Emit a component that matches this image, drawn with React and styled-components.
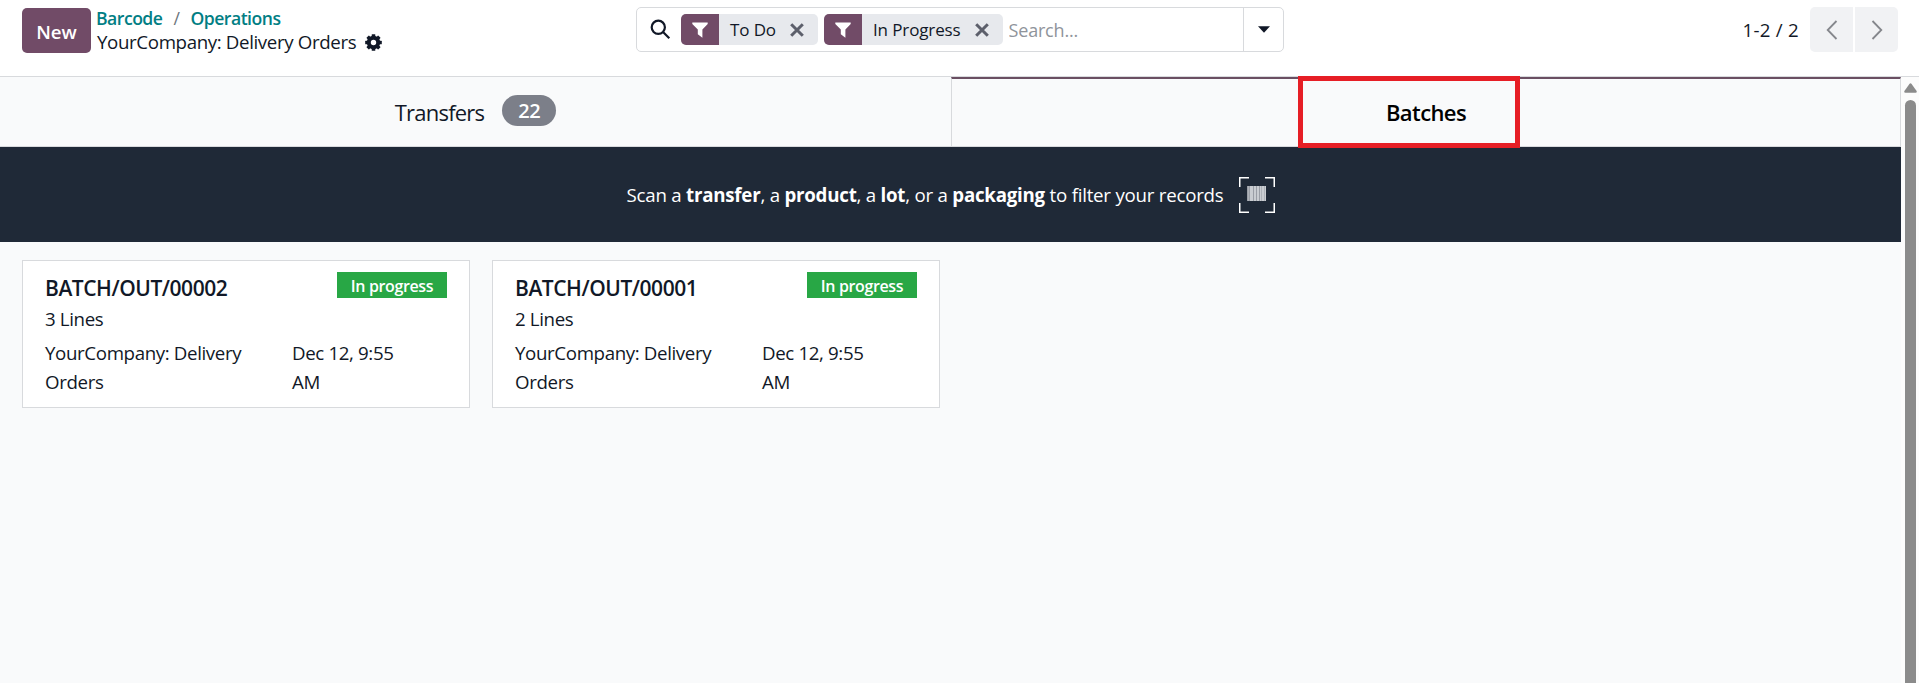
import styled, { createGlobalStyle } from "styled-components";

const batches = [
  { name: "BATCH/OUT/00002", lines: 3, date: "Dec 12, 9:55 AM" },
  { name: "BATCH/OUT/00001", lines: 2, date: "Dec 12, 9:55 AM" },
];

const facets = ["To Do", "In Progress"];

const Facet = ({ label }) => (
  <FacetWrapper>
    <FacetIcon>
      <svg width="16" height="16" viewBox="0 0 16 16" fill="#fff">
        <path d="M0.3 0.4H15.7V2L10.4 7.6V15.8L5.8 12.2V7.6L0.3 2Z" />
      </svg>
    </FacetIcon>
    <FacetLabel>{label}</FacetLabel>
    <FacetClose aria-label="Remove">
      <svg width="14" height="14" viewBox="0 0 14 14">
        <path d="M1.2 1.2L12.8 12.8M12.8 1.2L1.2 12.8" stroke="#5c5f6b" strokeWidth="3" />
      </svg>
    </FacetClose>
  </FacetWrapper>
);

const GearIcon = () => (
  <svg width="17" height="17" viewBox="0 0 17 17">
    <circle cx="8.5" cy="8.5" r="4.7" fill="none" stroke="#111827" strokeWidth="4" />
    {[0, 45, 90, 135, 180, 225, 270, 315].map((angle) => (
      <rect
        key={angle}
        x="6.7"
        y="0.2"
        width="3.6"
        height="3"
        rx="0.5"
        fill="#111827"
        transform={`rotate(${angle} 8.5 8.5)`}
      />
    ))}
  </svg>
);

const BarcodeIcon = () => (
  <svg width="36" height="36" viewBox="0 0 36 36">
    <path
      d="M0.75 10V0.75H10M26 0.75H35.25V10M35.25 26V35.25H26M10 35.25H0.75V26"
      fill="none"
      stroke="#fff"
      strokeWidth="1.5"
    />
    <rect x="8" y="9" width="19" height="15" fill="#c9ccd1" />
    <path d="M8.5 9V24M10.5 9V24M14.5 9V24M17.5 9V24M20.5 9V24" stroke="#9a9ea6" />
    <path d="M9.5 9V24M22.5 9V24M25.5 9V24" stroke="#adb1b8" />
  </svg>
);

const BatchCard = ({ batch }) => (
  <Card>
    <CardHeader>
      <CardTitle>{batch.name}</CardTitle>
      <Status>In progress</Status>
    </CardHeader>
    <CardLines>{batch.lines} Lines</CardLines>
    <CardDetails>
      <span>YourCompany: Delivery Orders</span>
      <span>{batch.date}</span>
    </CardDetails>
  </Card>
);

const App = () => {
  return (
    <Page>
      <GlobalStyle />
      <ControlPanel>
        <Left>
          <NewButton>New</NewButton>
          <Breadcrumb>
            <Links>
              <a>Barcode</a>
              <Slash>/</Slash>
              <a>Operations</a>
            </Links>
            <Current>
              YourCompany: Delivery Orders
              <GearIcon />
            </Current>
          </Breadcrumb>
        </Left>
        <SearchBar>
          <SearchIcon width="21" height="21" viewBox="0 0 21 21">
            <circle cx="8.3" cy="8.3" r="6.6" />
            <path d="M13 13L19.3 19.3" />
          </SearchIcon>
          {facets.map((label) => (
            <Facet key={label} label={label} />
          ))}
          <SearchInput placeholder="Search..." />
          <Toggler aria-label="Toggle search panel">
            <svg width="12" height="7" viewBox="0 0 12 7" fill="#111827">
              <path d="M0 0.3H12L6 6.8Z" />
            </svg>
          </Toggler>
        </SearchBar>
        <Pager>
          <span>1-2 / 2</span>
          <PagerButton $side="left" aria-label="Previous">
            <svg width="12" height="20" viewBox="0 0 12 20">
              <path d="M10.5 1L1.7 10L10.5 19" />
            </svg>
          </PagerButton>
          <PagerButton $side="right" aria-label="Next">
            <svg width="12" height="20" viewBox="0 0 12 20">
              <path d="M1.5 1L10.3 10L1.5 19" />
            </svg>
          </PagerButton>
        </Pager>
      </ControlPanel>
      <Main>
        <Content>
          <Tabs>
            <Tab>
              Transfers
              <Count>22</Count>
            </Tab>
            <Tab $active>
              Batches
              <Highlight />
            </Tab>
          </Tabs>
          <Banner>
            <p>
              Scan a <b>transfer</b>, a <b>product</b>, a <b>lot</b>, or a{" "}
              <b>packaging</b> to filter your records
            </p>
            <BarcodeIcon />
          </Banner>
          <Cards>
            {batches.map((batch) => (
              <BatchCard key={batch.name} batch={batch} />
            ))}
          </Cards>
        </Content>
        <Scrollbar>
          <svg width="13" height="10" viewBox="0 0 13 10" fill="#8b8b8b">
            <path d="M5.4 0.9Q6.5 -0.4 7.6 0.9L12.6 8Q13.2 9.7 11.6 9.8H1.4Q-0.2 9.7 0.4 8Z" />
          </svg>
          <Thumb />
        </Scrollbar>
      </Main>
    </Page>
  );
};

const GlobalStyle = createGlobalStyle`
  * {
    box-sizing: border-box;
  }

  body {
    margin: 0;
    background-color: #f9fafb;
    color: #111827;
    font-family: "Open Sans", "Noto Sans", sans-serif;
    font-size: 18.7px;
    letter-spacing: -0.36px;
  }

  button,
  input {
    font: inherit;
    color: inherit;
    border: 0;
    padding: 0;
    background: none;
  }

  svg {
    display: block;
    flex: none;
  }
`;

const Page = styled.div`
  display: flex;
  flex-direction: column;
  height: 100vh;
  overflow: hidden;
`;

const ControlPanel = styled.header`
  display: grid;
  grid-template-columns: 614px 648px 1fr;
  align-items: start;
  height: 77px;
  flex: none;
  padding: 7px 21px 0 22px;
  background-color: #fff;
  border-bottom: 1px solid #d8dadd;
`;

const Left = styled.div`
  display: flex;
  gap: 6px;
`;

const NewButton = styled.button`
  width: 69px;
  height: 45px;
  margin-top: 1px;
  padding-top: 1px;
  border-radius: 5px;
  background-color: #714b67;
  color: #fff;
  font-weight: 600;
  letter-spacing: 0;
`;

const Breadcrumb = styled.div`
  margin-top: -1px;
  line-height: 24px;
  white-space: nowrap;
`;

const Links = styled.div`
  display: flex;
  margin-left: -1px;
  color: #017e84;
  font-size: 17.6px;
  font-weight: 600;
  letter-spacing: -0.5px;
`;

const Slash = styled.span`
  margin: 0 11px;
  color: #6c757d;
  font-weight: 400;
`;

const Current = styled.div`
  display: flex;
  align-items: center;
  gap: 9px;
`;

const SearchBar = styled.div`
  display: flex;
  align-items: center;
  height: 45px;
  padding-left: 13px;
  border: 1px solid #d8dadd;
  border-radius: 5px;
`;

const SearchIcon = styled.svg`
  margin-right: 10px;
  fill: none;
  stroke: #111827;
  stroke-width: 2.2;
`;

const FacetWrapper = styled.div`
  display: flex;
  height: 31px;
  margin-right: 6px;
  border-radius: 5px;
  overflow: hidden;
  background-color: #e7e9ed;
  font-size: 17px;
  letter-spacing: -0.12px;
  line-height: 31px;
`;

const FacetIcon = styled.div`
  display: grid;
  place-items: center;
  width: 38px;
  background-color: #714b67;
`;

const FacetLabel = styled.span`
  margin: 0 14px 0 11px;
`;

const FacetClose = styled.button`
  margin-right: 14px;
`;

const SearchInput = styled.input`
  flex: 1;
  min-width: 0;
  height: 43px;
  font-size: 18px;
  letter-spacing: -0.2px;
  outline: none;

  &::placeholder {
    color: #8f949b;
  }
`;

const Toggler = styled.button`
  display: grid;
  place-items: center;
  width: 40px;
  height: 43px;
  border-left: 1px solid #d8dadd;
`;

const Pager = styled.div`
  display: flex;
  justify-content: flex-end;
  line-height: 45px;
  letter-spacing: 0.25px;

  span {
    margin-right: 11px;
  }
`;

const PagerButton = styled.button`
  display: grid;
  place-items: center;
  width: 43px;
  height: 45px;
  background-color: #f1f2f4;
  border-radius: ${({ $side }) => ($side === "left" ? "5px 0 0 5px" : "0 5px 5px 0")};

  & + & {
    margin-left: 2px;
  }

  path {
    fill: none;
    stroke: #85878c;
    stroke-width: 1.8;
  }
`;

const Main = styled.main`
  display: flex;
  flex: 1;
  min-height: 0;
`;

const Content = styled.div`
  flex: 1;
`;

const Tabs = styled.div`
  display: grid;
  grid-template-columns: 951px 950px;
  height: 70px;
  border-bottom: 1px solid #d8dadd;
`;

const Tab = styled.div`
  position: relative;
  display: flex;
  justify-content: center;
  padding-top: ${({ $active }) => ($active ? "18px" : "20px")};
  border: solid #d8dadd;
  border-width: ${({ $active }) => ($active ? "2px 1px 0" : "0")};
  border-top-color: #6a4f62;
  color: ${({ $active }) => ($active ? "#000" : "inherit")};
  font-size: 22px;
  font-weight: ${({ $active }) => ($active ? 600 : 400)};
  letter-spacing: ${({ $active }) => ($active ? "-0.6px" : "-0.78px")};
  line-height: 30px;
`;

const Count = styled.span`
  width: 54px;
  height: 31px;
  margin: -2px 0 0 18px;
  border-radius: 16px;
  background-color: #7c7f89;
  color: #fff;
  font-size: 20px;
  font-weight: 600;
  letter-spacing: -0.3px;
  line-height: 31px;
  text-align: center;
`;

// sits over the tab and its borders
const Highlight = styled.div`
  position: absolute;
  top: -3px;
  left: 346px;
  width: 222px;
  height: 72px;
  border: 5px solid #e61e25;
`;

const Banner = styled.div`
  display: flex;
  align-items: center;
  justify-content: center;
  gap: 15px;
  height: 95px;
  background-color: #1f2937;
  color: #fff;
  letter-spacing: -0.23px;

  p {
    margin: 0;
  }
`;

const Cards = styled.div`
  display: flex;
  gap: 22px;
  padding: 18px 22px;
`;

const Card = styled.article`
  width: 448px;
  height: 148px;
  padding: 11px 22px;
  border: 1px solid #d8dadd;
  background-color: #fff;
`;

const CardHeader = styled.div`
  display: flex;
  justify-content: space-between;
  align-items: flex-start;
  height: 33px;
`;

const CardTitle = styled.span`
  padding-top: 1px;
  font-size: 21px;
  font-weight: 600;
  letter-spacing: -0.45px;
  line-height: 30px;
`;

const Status = styled.span`
  width: 110px;
  height: 26px;
  padding-top: 1px;
  background-color: #28a745;
  color: #fff;
  font-size: 16px;
  font-weight: 600;
  line-height: 26px;
  text-align: center;
`;

const CardLines = styled.div`
  line-height: 28px;
`;

const CardDetails = styled.div`
  display: grid;
  grid-template-columns: 247px 125px;
  margin-top: 5px;
  line-height: 29px;
`;

const Scrollbar = styled.div`
  display: flex;
  flex-direction: column;
  align-items: center;
  width: 18px;
  padding: 6px 0 0 1px;
  background-color: #fcfcfc;
`;

const Thumb = styled.div`
  flex: 1;
  width: 11px;
  margin-top: 7px;
  border-radius: 6px 6px 0 0;
  background-color: #8b8b8b;
`;

export default App;
